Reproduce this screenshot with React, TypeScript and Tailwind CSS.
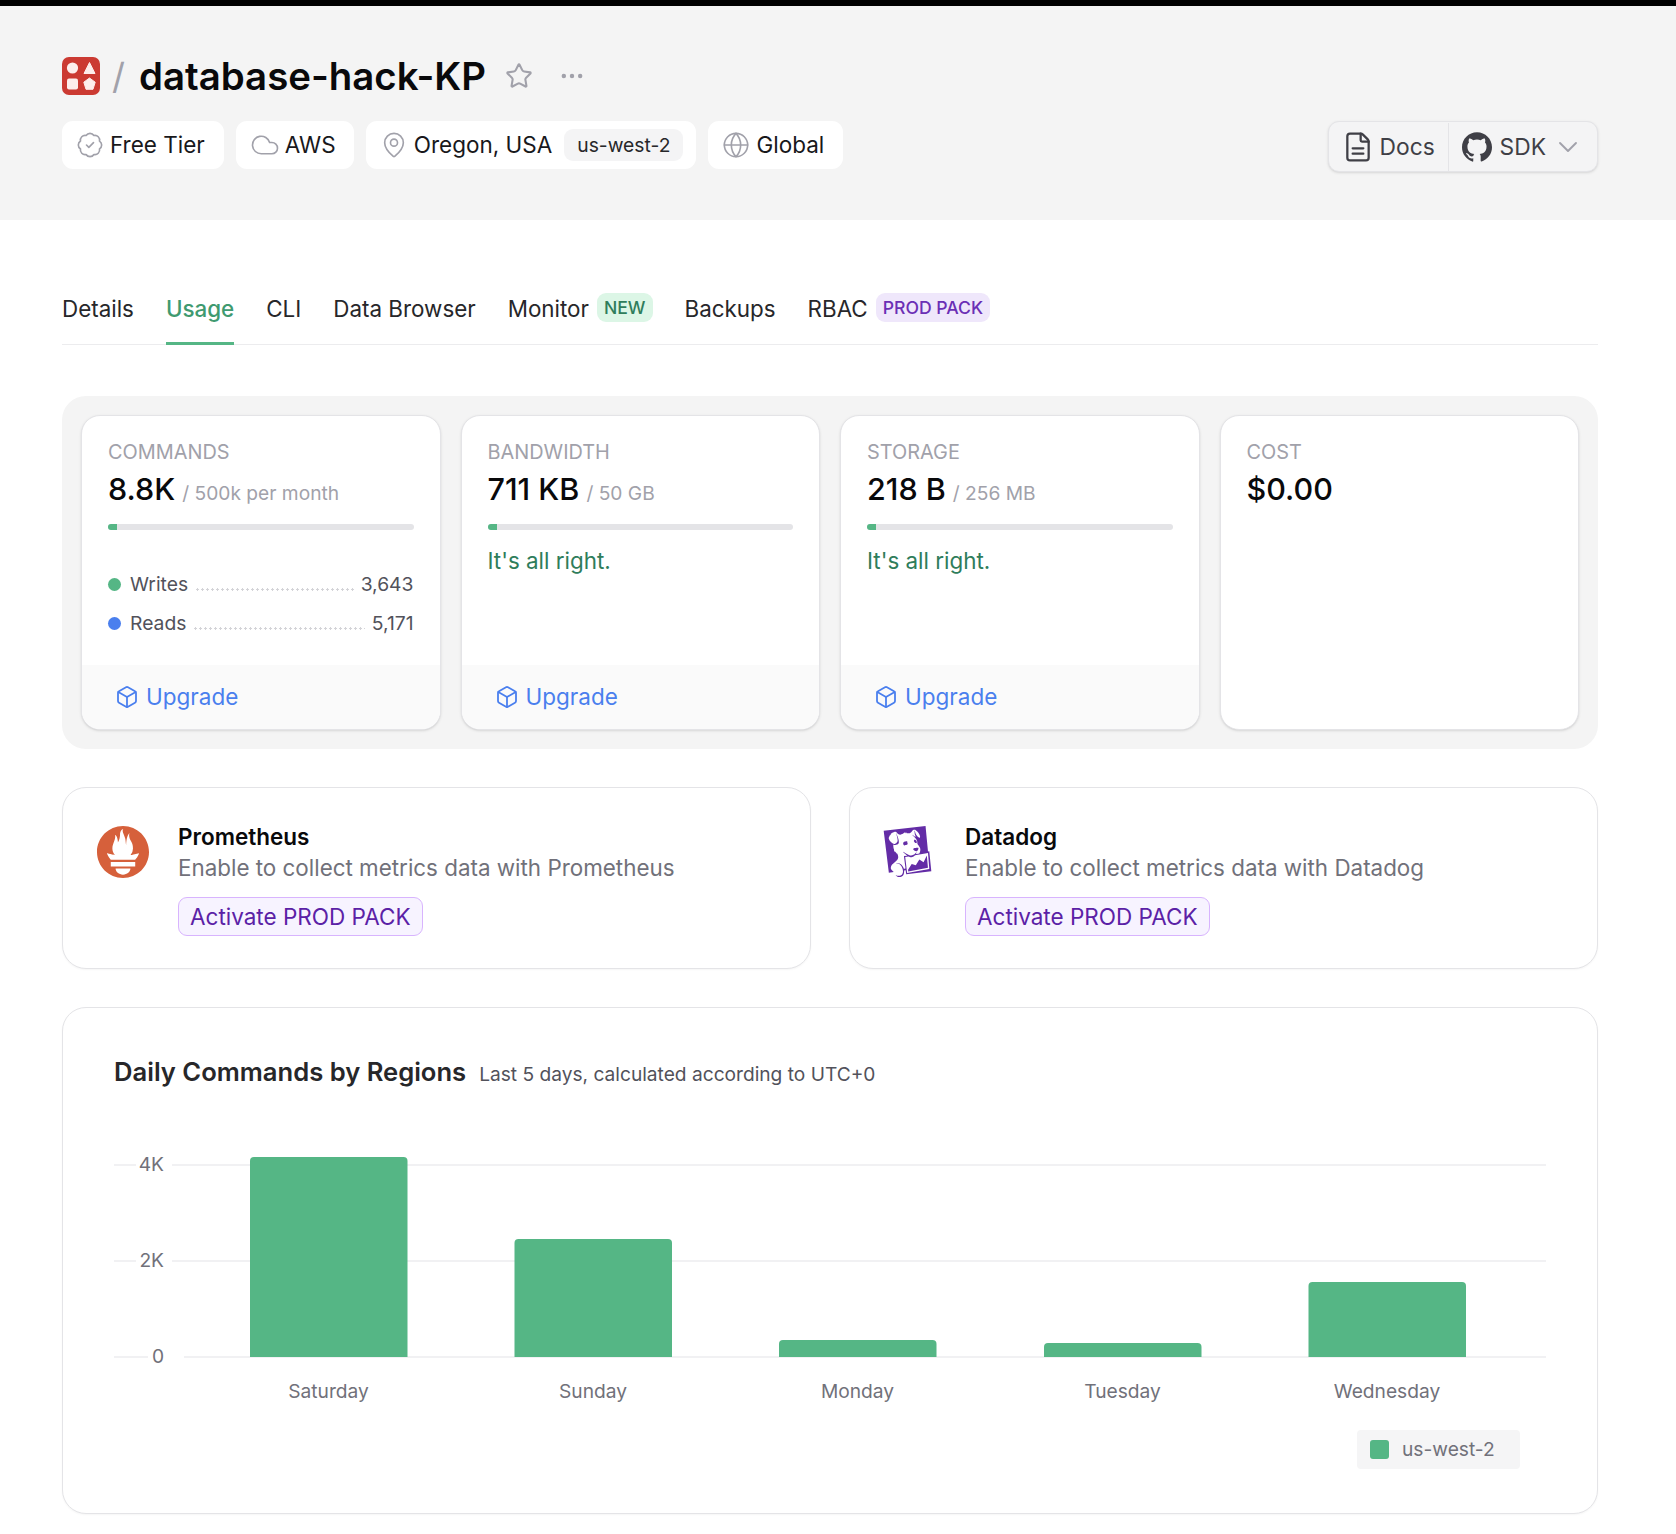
import { BadgeCheck, Box, ChevronDown, Cloud, Ellipsis, Globe, MapPin, Star } from 'lucide-react';
import { SiDatadog, SiGithub, SiPrometheus } from 'react-icons/si';

const tabs = [
  { name: 'Details' },
  { name: 'Usage', active: true },
  { name: 'CLI' },
  { name: 'Data Browser' },
  { name: 'Monitor', badge: 'NEW', badgeClass: 'bg-[#dcf6e6] text-[#2f7d5b]' },
  { name: 'Backups' },
  { name: 'RBAC', badge: 'PROD PACK', badgeClass: 'bg-[#efe7fb] text-[#6b2fb5]' },
];

const bars = [
  { day: 'Saturday', x: 250, top: 1157 },
  { day: 'Sunday', x: 514.5, top: 1239 },
  { day: 'Monday', x: 779, top: 1340 },
  { day: 'Tuesday', x: 1044, top: 1343 },
  { day: 'Wednesday', x: 1308.5, top: 1282 },
];

function Logo() {
  return (
    <svg viewBox="0 0 38 38" className="h-[38px] w-[38px] shrink-0">
      <rect width="38" height="38" rx="7" fill="#cb3a32" />
      <circle cx="10.5" cy="11" r="5.6" fill="#fdeeec" />
      <path d="M27.5 5.5 L33 16.5 L22 16.5 Z" fill="#fdeeec" stroke="#fdeeec" strokeLinejoin="round" />
      <rect x="5" y="21.5" width="11" height="11" rx="2" fill="#fdeeec" />
      <path d="M27.5 21 L33.2 25.2 L31 32.3 L24 32.3 L21.8 25.2 Z" fill="#fdeeec" stroke="#fdeeec" strokeLinejoin="round" />
    </svg>
  );
}

function DocIcon() {
  return (
    <svg viewBox="0 0 24 24" fill="none" stroke="currentColor" strokeWidth="1.7" strokeLinecap="round" strokeLinejoin="round" className="-mx-[3px] h-[32px] w-[32px]">
      <path d="M6 22a2 2 0 0 1-2-2V4a2 2 0 0 1 2-2h8a2.4 2.4 0 0 1 1.7.7l3.6 3.6A2.4 2.4 0 0 1 20 8v12a2 2 0 0 1-2 2z" />
      <path d="M14 2v5a1 1 0 0 0 1 1h5" />
      <path d="M8 13h8" />
      <path d="M8 17h8" />
    </svg>
  );
}

function Chip({ children, last = 'pr-[19px]' }: { children: React.ReactNode; last?: string }) {
  return (
    <div className={`flex h-12 items-center gap-[8px] rounded-[11px] bg-white pl-[16px] text-[22.5px] text-[#18181b] ${last}`}>{children}</div>
  );
}

function Meter({ label, value, sub, note }: { label: string; value: string; sub?: string; note?: string }) {
  return (
    <>
      <div className="text-[19.9px] leading-[24px] text-[#a1a1aa]">{label}</div>
      <div className="mt-[2px] flex h-[36px] items-baseline gap-[7px]">
        <span className="text-[30.5px] font-medium text-[#09090b]">{value}</span>
        {sub && <span className="text-[19.2px] text-[#a1a1aa]">{sub}</span>}
      </div>
      {sub && (
        <div className="mt-[22px] h-[6px] overflow-hidden rounded-full bg-[#e4e4e7]">
          <div className="h-full w-[9px] bg-[#55b685]" />
        </div>
      )}
      {note && <div className="mt-[16px] text-[22.4px] leading-[30px] text-[#2f7d5b]">{note}</div>}
    </>
  );
}

function StatRow({ dot, label, value }: { dot: string; label: string; value: string }) {
  return (
    <div className="flex h-[26px] items-center text-[19.3px] text-[#52525b]">
      <span className={`h-[13px] w-[13px] rounded-full ${dot}`} />
      <span className="ml-[9px]">{label}</span>
      <span className="mx-[7px] mt-[10px] h-[3px] flex-1 bg-[radial-gradient(circle,#d4d4d8_1.2px,transparent_1.4px)] bg-[length:5px_3px]" />
      <span>{value}</span>
    </div>
  );
}

function StatCard({ children, upgrade = true }: { children: React.ReactNode; upgrade?: boolean }) {
  return (
    <div className="flex flex-col overflow-hidden rounded-[19px] border border-[#e4e4e7] bg-white shadow-sm">
      <div className="flex-1 px-[26px] pt-[24px]">{children}</div>
      {upgrade && (
        <div className="flex h-[64px] items-center gap-[7px] bg-[#fafafa] px-[33px] text-[22.5px] text-[#4a7fee]">
          <Box className="h-[24px] w-[24px]" strokeWidth={1.8} />
          Upgrade
        </div>
      )}
    </div>
  );
}

function Integration({ icon, name, text }: { icon: React.ReactNode; name: string; text: string }) {
  return (
    <div className="flex h-[182px] rounded-[24px] border border-[#e4e4e7] bg-white pl-[34px] pt-[37px] shadow-[0_1px_2px_rgba(0,0,0,0.04)]">
      <div className="mt-[1px] w-[81px] shrink-0">{icon}</div>
      <div>
        <div className="text-[22.5px] font-semibold leading-[24px] text-[#09090b]">{name}</div>
        <div className="mt-[4px] text-[22.4px] leading-[30px] text-[#71717a]">{text}</div>
        <button className="mt-[14px] flex h-[39px] items-center rounded-[9px] border border-[#d8b4fe] bg-[#f7f3ff] px-[11px] text-[22.5px] text-[#5b21a6]">
          Activate PROD PACK
        </button>
      </div>
    </div>
  );
}

function Chart() {
  return (
    <svg viewBox="63 1130 1534 280" className="mt-[41px] block h-[280px] w-[1534px]">
      {[1165, 1261, 1357].map((y) => (
        <line key={y} x1="114" x2="1546" y1={y} y2={y} stroke="#f1f1f3" strokeWidth="2" />
      ))}
      {[
        { t: '4K', y: 1165, x: 136 },
        { t: '2K', y: 1261, x: 136 },
        { t: '0', y: 1357, x: 148 },
      ].map((l) => (
        <g key={l.t}>
          <rect x={l.x} y={l.y - 6} width="36" height="12" fill="white" />
          <text x="164" y={l.y + 6} textAnchor="end" fontSize="19.2" fill="#71717a">
            {l.t}
          </text>
        </g>
      ))}
      {bars.map((b) => (
        <g key={b.day}>
          <path
            d={`M${b.x} 1357 V${b.top + 4} Q${b.x} ${b.top} ${b.x + 4} ${b.top} H${b.x + 153.5} Q${b.x + 157.5} ${b.top} ${b.x + 157.5} ${b.top + 4} V1357 Z`}
            fill="#55b685"
          />
          <text x={b.x + 78.5} y="1398" textAnchor="middle" fontSize="19.2" fill="#71717a">
            {b.day}
          </text>
        </g>
      ))}
    </svg>
  );
}

export default function App() {
  return (
    <div className="min-h-[1534px] bg-white font-['Inter',sans-serif]">
      <div className="h-[6px] bg-black" />

      {/* Header */}
      <div className="h-[214px] bg-[#f4f4f4] pl-[62px] pr-[78px] pt-[51px]">
        <div className="flex h-[38px] items-center">
          <Logo />
          <span className="ml-[12px] text-[36px] font-normal text-[#a1a1aa]">/</span>
          <h1 className="ml-[14px] mt-[2px] text-[38.4px] font-semibold text-[#09090b]">database-hack-KP</h1>
          <Star className="ml-[19px] h-[28px] w-[28px] text-[#a1a1aa]" strokeWidth={1.8} />
          <Ellipsis className="ml-[25px] h-[28px] w-[28px] text-[#a1a1aa]" strokeWidth={1.8} />
        </div>
        <div className="mt-[26px] flex items-start justify-between">
          <div className="flex gap-[12px]">
            <Chip>
              <BadgeCheck className="-mx-[2px] h-[28px] w-[28px] text-[#a1a1aa]" strokeWidth={1.4} />
              Free Tier
            </Chip>
            <Chip last="pr-[18px]">
              <Cloud className="-ml-[2px] -mr-[3px] h-[30px] w-[30px] text-[#a1a1aa]" strokeWidth={1.3} />
              AWS
            </Chip>
            <Chip last="pr-[13px]">
              <MapPin className="-mx-[2px] h-[28px] w-[28px] text-[#a1a1aa]" strokeWidth={1.4} />
              Oregon, USA
              <span className="ml-[4px] rounded-[9px] bg-[#f4f4f5] px-[13px] py-[2px] text-[19.3px] text-[#27272a]">us-west-2</span>
            </Chip>
            <Chip>
              <Globe className="-mx-[2px] h-[28px] w-[28px] text-[#a1a1aa]" strokeWidth={1.4} />
              Global
            </Chip>
          </div>
          <div className="flex h-[51px] items-center rounded-[11px] border border-[#e4e4e7] bg-[#f4f4f5] pt-[1px] text-[22.8px] text-[#3f3f46] shadow-sm">
            <div className="flex h-full w-[120px] items-center gap-[9px] border-r border-[#e4e4e7] pl-[16px]">
              <DocIcon />
              Docs
            </div>
            <div className="flex items-center gap-[8px] pl-[13px] pr-[13px]">
              <SiGithub className="h-[30px] w-[30px]" />
              SDK
              <ChevronDown className="-ml-[2px] h-[32px] w-[32px] text-[#a1a1aa]" strokeWidth={1.4} />
            </div>
          </div>
        </div>
      </div>

      <div className="pl-[62px] pr-[78px]">
        {/* Tabs */}
        <div className="mt-[66px] flex h-[59px] gap-[32px] border-b border-[#ececee]">
          {tabs.map((tab) => (
            <div
              key={tab.name}
              className={`-mb-px flex h-[59px] items-start gap-[8px] border-b-[3px] pt-[8px] text-[22.4px] leading-[30px] ${
                tab.active ? 'border-[#55b685] font-medium text-[#3f9a70]' : 'border-transparent text-[#27272a]'
              }`}
            >
              {tab.name}
              {tab.badge && (
                <span className={`-mt-[1px] flex h-[29px] items-center rounded-[9px] px-[7px] text-[17.6px] font-medium ${tab.badgeClass}`}>
                  {tab.badge}
                </span>
              )}
            </div>
          ))}
        </div>

        {/* Usage */}
        <div className="mt-[51px] grid h-[353px] grid-cols-4 gap-[20px] rounded-[24px] bg-[#f4f4f4] p-[19px]">
          <StatCard>
            <Meter label="COMMANDS" value="8.8K" sub="/ 500k per month" />
            <div className="mt-[41px] flex flex-col gap-[13px]">
              <StatRow dot="bg-[#55b685]" label="Writes" value="3,643" />
              <StatRow dot="bg-[#4a7fee]" label="Reads" value="5,171" />
            </div>
          </StatCard>
          <StatCard>
            <Meter label="BANDWIDTH" value="711 KB" sub="/ 50 GB" note="It's all right." />
          </StatCard>
          <StatCard>
            <Meter label="STORAGE" value="218 B" sub="/ 256 MB" note="It's all right." />
          </StatCard>
          <StatCard upgrade={false}>
            <Meter label="COST" value="$0.00" />
          </StatCard>
        </div>

        {/* Integrations */}
        <div className="mt-[38px] grid grid-cols-2 gap-[38px]">
          <Integration
            icon={<SiPrometheus className="h-[52px] w-[52px] text-[#d6603b]" />}
            name="Prometheus"
            text="Enable to collect metrics data with Prometheus"
          />
          <Integration
            icon={<SiDatadog className="-ml-[2px] h-[51px] w-[51px] text-[#632ca6]" />}
            name="Datadog"
            text="Enable to collect metrics data with Datadog"
          />
        </div>

        {/* Daily commands */}
        <div className="mt-[38px] h-[507px] rounded-[24px] border border-[#e4e4e7] bg-white shadow-[0_1px_2px_rgba(0,0,0,0.04)]">
          <div className="flex items-baseline gap-[13px] pl-[51px] pt-[48px]">
            <span className="text-[25.6px] font-semibold leading-[32px] text-[#27272a]">Daily Commands by Regions</span>
            <span className="text-[19.15px] text-[#52525b]">Last 5 days, calculated according to UTC+0</span>
          </div>
          <Chart />
          <div className="mr-[77px] mt-[20px] flex justify-end">
            <div className="flex h-[39px] w-[163px] items-center gap-[13px] rounded-[4px] bg-[#f5f5f6] pl-[13px] pt-[1px] text-[19.2px] text-[#71717a]">
              <span className="h-[19px] w-[19px] rounded-[3px] bg-[#55b685]" />
              us-west-2
            </div>
          </div>
        </div>
      </div>
    </div>
  );
}
